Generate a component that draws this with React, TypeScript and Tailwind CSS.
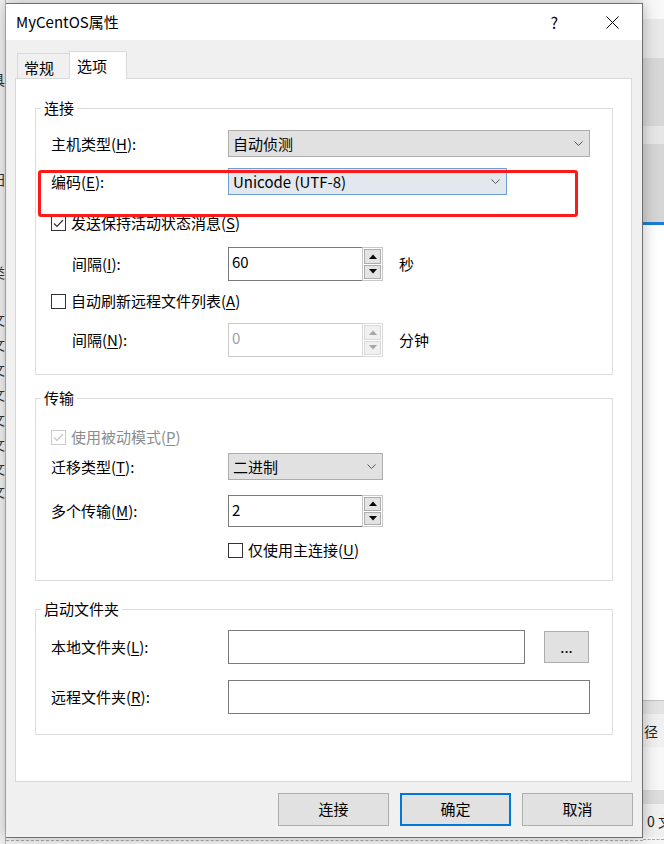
import React from 'react';

const Key = ({ k }: { k: string }) => (
  <span className="underline underline-offset-[2px]">{k}</span>
);

const Chevron = () => (
  <svg width="9" height="5" viewBox="0 0 9 5">
    <polyline points="0.5,0.5 4.5,4.5 8.5,0.5" fill="none" stroke="#555" strokeWidth="1" />
  </svg>
);

const Check = ({ checked, disabled }: { checked?: boolean; disabled?: boolean }) => (
  <svg width="15" height="15" viewBox="0 0 15 15" className="shrink-0">
    <rect x="0.5" y="0.5" width="14" height="14" fill="#fff" stroke={disabled ? '#cccccc' : '#333333'} />
    {checked && (
      <polyline
        points="3,7.5 6,10.5 12,4"
        fill="none"
        stroke={disabled ? '#c4c4c4' : '#333333'}
        strokeWidth="1.2"
      />
    )}
  </svg>
);

const Combo = ({ value, className }: { value: string; className: string }) => (
  <div className={`flex h-[27px] items-center justify-between border pl-[4px] pr-[6px] ${className}`}>
    <span className="leading-[20px]">{value}</span>
    <Chevron />
  </div>
);

const Arrow = ({ up, color }: { up?: boolean; color: string }) => (
  <svg width="8" height="5" viewBox="0 0 8 5">
    <polygon points={up ? '0,5 8,5 4,0.5' : '0,0 8,0 4,4.5'} fill={color} />
  </svg>
);

const Spin = ({ value, disabled, h }: { value: string; disabled?: boolean; h: string }) => (
  <div className={`flex w-[155px] ${h}`}>
    <div
      className={`flex-1 border-y border-l bg-white pl-[3px] pt-[4px] leading-[20px] ${
        disabled ? 'border-[#cccccc] text-[#a0a0a0]' : 'border-[#7a7a7a] text-black'
      }`}
    >
      {value}
    </div>
    <div
      className={`flex w-[21px] flex-col gap-[1px] border bg-white p-[1px] ${
        disabled ? 'border-[#d9d9d9]' : 'border-[#c8c8c8]'
      }`}
    >
      {[true, false].map((up) => (
        <div
          key={String(up)}
          className={`flex flex-1 items-center justify-center border ${
            disabled ? 'border-[#d9d9d9] bg-[#f0f0f0]' : 'border-[#adadad] bg-[#e3e3e3]'
          }`}
        >
          <Arrow up={up} color={disabled ? '#a8a8a8' : '#000'} />
        </div>
      ))}
    </div>
  </div>
);

const Group = ({ title, className, children }: { title: string; className: string; children: React.ReactNode }) => (
  <fieldset className={`w-[578px] border border-[#dcdcdc] ${className}`}>
    <legend className="ml-[5px] px-[3px] leading-[20px]">{title}</legend>
    <div className="pl-[15px]">{children}</div>
  </fieldset>
);

const Label = ({ children, indent }: { children: React.ReactNode; indent?: boolean }) => (
  <div className={`w-[177px] shrink-0 leading-[20px] ${indent ? 'pl-[21px]' : ''}`}>{children}</div>
);

const Btn = ({ label, primary }: { label: string; primary?: boolean }) => (
  <div
    className={`flex h-[33px] w-[111px] items-center justify-center bg-[#e1e1e1] ${
      primary ? 'border-2 border-[#0078d7]' : 'border border-[#adadad]'
    }`}
  >
    {label}
  </div>
);

const LeftFragments = [
  { h: 30, t: '' },
  { h: 18, t: 'S' },
  { h: 22, t: '' },
  { h: 18, t: '具' },
  { h: 20, t: '' },
  { h: 18, t: 'S' },
  { h: 44, t: '' },
  { h: 18, t: '田' },
  { h: 75, t: '' },
  { h: 18, t: '类' },
  { h: 29, t: '' },
  { h: 25, t: '文' },
  { h: 25, t: '文' },
  { h: 25, t: '文' },
  { h: 25, t: '文' },
  { h: 25, t: '文' },
  { h: 24, t: '文' },
  { h: 23, t: '文' },
  { h: 23, t: '文' },
];

export default function App() {
  return (
    <div className="relative flex h-[844px] w-[664px] overflow-hidden bg-[#f3f3f3] font-['Noto_Sans_CJK_SC','Noto_Sans',sans-serif] text-[15px] text-black">
      {/* window behind, left edge */}
      <div className="flex h-full w-[6px] shrink-0 flex-col overflow-hidden border-r border-[#b5b5b5] bg-[#f0f0f0]">
        {LeftFragments.map((f, i) => (
          <div key={i} className="shrink-0 overflow-hidden text-[14px] leading-[18px] text-[#333]" style={{ height: f.h }}>
            <span className="-ml-[9px] block">{f.t}</span>
          </div>
        ))}
      </div>

      {/* dialog column */}
      <div className="flex w-[637px] shrink-0 flex-col">
        <div className="h-[3px] bg-[#f4f4f4]" />
        <div className="relative z-10 flex h-[835px] flex-col border border-[#6f6f6f] border-l-0 bg-[#f0f0f0] shadow-[0_0_14px_rgba(0,0,0,0.28)]">
          {/* title bar */}
          <div className="flex h-[36px] items-center bg-white pl-[10px] pr-[23px]">
            <span className="flex-1 leading-[20px]">MyCentOS属性</span>
            <span className="text-[16px] leading-[20px]">?</span>
            <svg width="13" height="13" viewBox="0 0 13 13" className="ml-[48px]">
              <path d="M0.5 0.5 L12.5 12.5 M12.5 0.5 L0.5 12.5" stroke="#000" strokeWidth="1" />
            </svg>
          </div>

          {/* tabs */}
          <div className="ml-[11px] mt-[11px] flex h-[28px] items-end">
            <div className="flex h-[26px] w-[53px] items-center border-x border-t border-[#d9d9d9] bg-[#f0f0f0] pl-[6px] pt-[2px] leading-[20px]">
              常规
            </div>
            <div className="relative z-10 -ml-px flex h-[28px] w-[58px] items-center border-x border-t border-[#d9d9d9] bg-white pl-[7px] leading-[20px]">
              选项
            </div>
          </div>

          {/* tab panel */}
          <div className="-mt-px ml-[9px] h-[704px] w-[617px] border border-[#d9d9d9] bg-white pl-[19px] pt-[19px]">
            <Group title="连接" className="pb-[17px]">
              <div className="mt-[12px] flex items-center">
                <Label>
                  主机类型(<Key k="H" />):
                </Label>
                <Combo value="自动侦测" className="w-[362px] border-[#adadad] bg-[#e1e1e1]" />
              </div>
              <div className="mt-[11px] flex items-center">
                <Label>
                  编码(<Key k="E" />):
                </Label>
                <Combo value="Unicode (UTF-8)" className="w-[279px] border-[#6c9fd4] bg-[#e2e8ee]" />
              </div>
              <div className="mt-[18px] flex h-[20px] items-center gap-[5px]">
                <Check checked />
                <span className="leading-[20px]">
                  发送保持活动状态消息(<Key k="S" />)
                </span>
              </div>
              <div className="mt-[14px] flex items-center">
                <Label indent>
                  间隔(<Key k="I" />):
                </Label>
                <Spin value="60" h="h-[34px]" />
                <span className="ml-[16px] leading-[20px]">秒</span>
              </div>
              <div className="mt-[10px] flex h-[20px] items-center gap-[5px]">
                <Check />
                <span className="leading-[20px]">
                  自动刷新远程文件列表(<Key k="A" />)
                </span>
              </div>
              <div className="mt-[12px] flex items-center">
                <Label indent>
                  间隔(<Key k="N" />):
                </Label>
                <Spin value="0" h="h-[34px]" disabled />
                <span className="ml-[16px] leading-[20px]">分钟</span>
              </div>
            </Group>

            <Group title="传输" className="mt-[13px] pb-[20px]">
              <div className="mt-[19px] flex h-[20px] items-center gap-[5px] text-[#8c8c8c]">
                <Check checked disabled />
                <span className="leading-[20px]">
                  使用被动模式(<Key k="P" />)
                </span>
              </div>
              <div className="mt-[6px] flex items-center">
                <Label>
                  迁移类型(<Key k="T" />):
                </Label>
                <Combo value="二进制" className="w-[155px] border-[#adadad] bg-[#e1e1e1]" />
              </div>
              <div className="mt-[15px] flex items-center">
                <Label>
                  多个传输(<Key k="M" />):
                </Label>
                <Spin value="2" h="h-[32px]" />
              </div>
              <div className="mt-[13px] flex h-[20px] items-center gap-[5px] pl-[177px]">
                <Check />
                <span className="leading-[20px]">
                  仅使用主连接(<Key k="U" />)
                </span>
              </div>
            </Group>

            <Group title="启动文件夹" className="mt-[18px] pb-[20px]">
              <div className="mt-[11px] flex items-center">
                <Label>
                  本地文件夹(<Key k="L" />):
                </Label>
                <div className="h-[34px] w-[297px] border border-[#7a7a7a] bg-white" />
                <div className="ml-[19px] flex h-[32px] w-[45px] items-center justify-center border border-[#adadad] bg-[#e1e1e1] leading-[20px]">
                  ...
                </div>
              </div>
              <div className="mt-[16px] flex items-center">
                <Label>
                  远程文件夹(<Key k="R" />):
                </Label>
                <div className="h-[34px] w-[362px] border border-[#7a7a7a] bg-white" />
              </div>
            </Group>
          </div>

          {/* buttons */}
          <div className="mt-[11px] flex justify-end gap-[11px] pr-[9px]">
            <Btn label="连接" />
            <Btn label="确定" primary />
            <Btn label="取消" />
          </div>
        </div>
        <div className="flex-1 bg-[#f6f6f6] pt-[2px]">
          <div className="border-t border-dashed border-[#a9a9a9]" />
        </div>
      </div>

      {/* window behind, right edge */}
      <div className="flex h-full w-[21px] shrink-0 flex-col text-[14px] leading-[18px] text-[#222]">
        <div className="h-[19px] bg-[#f8f8f8]" />
        <div className="h-[39px] bg-[#e9e9e9]" />
        <div className="h-[68px] bg-[#d7d7d7]" />
        <div className="h-[18px] bg-[#e6e6e6]" />
        <div className="h-[78px] bg-[#d5d5d5]" />
        <div className="h-[3px] bg-[#1a7fd4]" />
        <div className="h-[475px] bg-white" />
        <div className="h-[14px] border-t border-[#c4c4c4] bg-[#e3e3e3]" />
        <div className="flex h-[33px] items-center bg-[#f0f0f0] pl-[1px]">径</div>
        <div className="h-[43px] bg-[#f7f7f7]" />
        <div className="h-[14px] bg-[#dcdcdc]" />
        <div className="flex h-[33px] items-center whitespace-nowrap bg-[#f0f0f0] pl-[4px]">0 文</div>
        <div className="flex-1 bg-[#f6f6f6] pt-[2px]">
          <div className="border-t border-dashed border-[#a9a9a9]" />
        </div>
      </div>

      {/* red annotation box, drawn over the dialog */}
      <div className="absolute left-[38px] top-[170px] z-20 h-[47px] w-[540px] rounded-[3px] border-[3px] border-[#ff1a1a]" />
    </div>
  );
}
